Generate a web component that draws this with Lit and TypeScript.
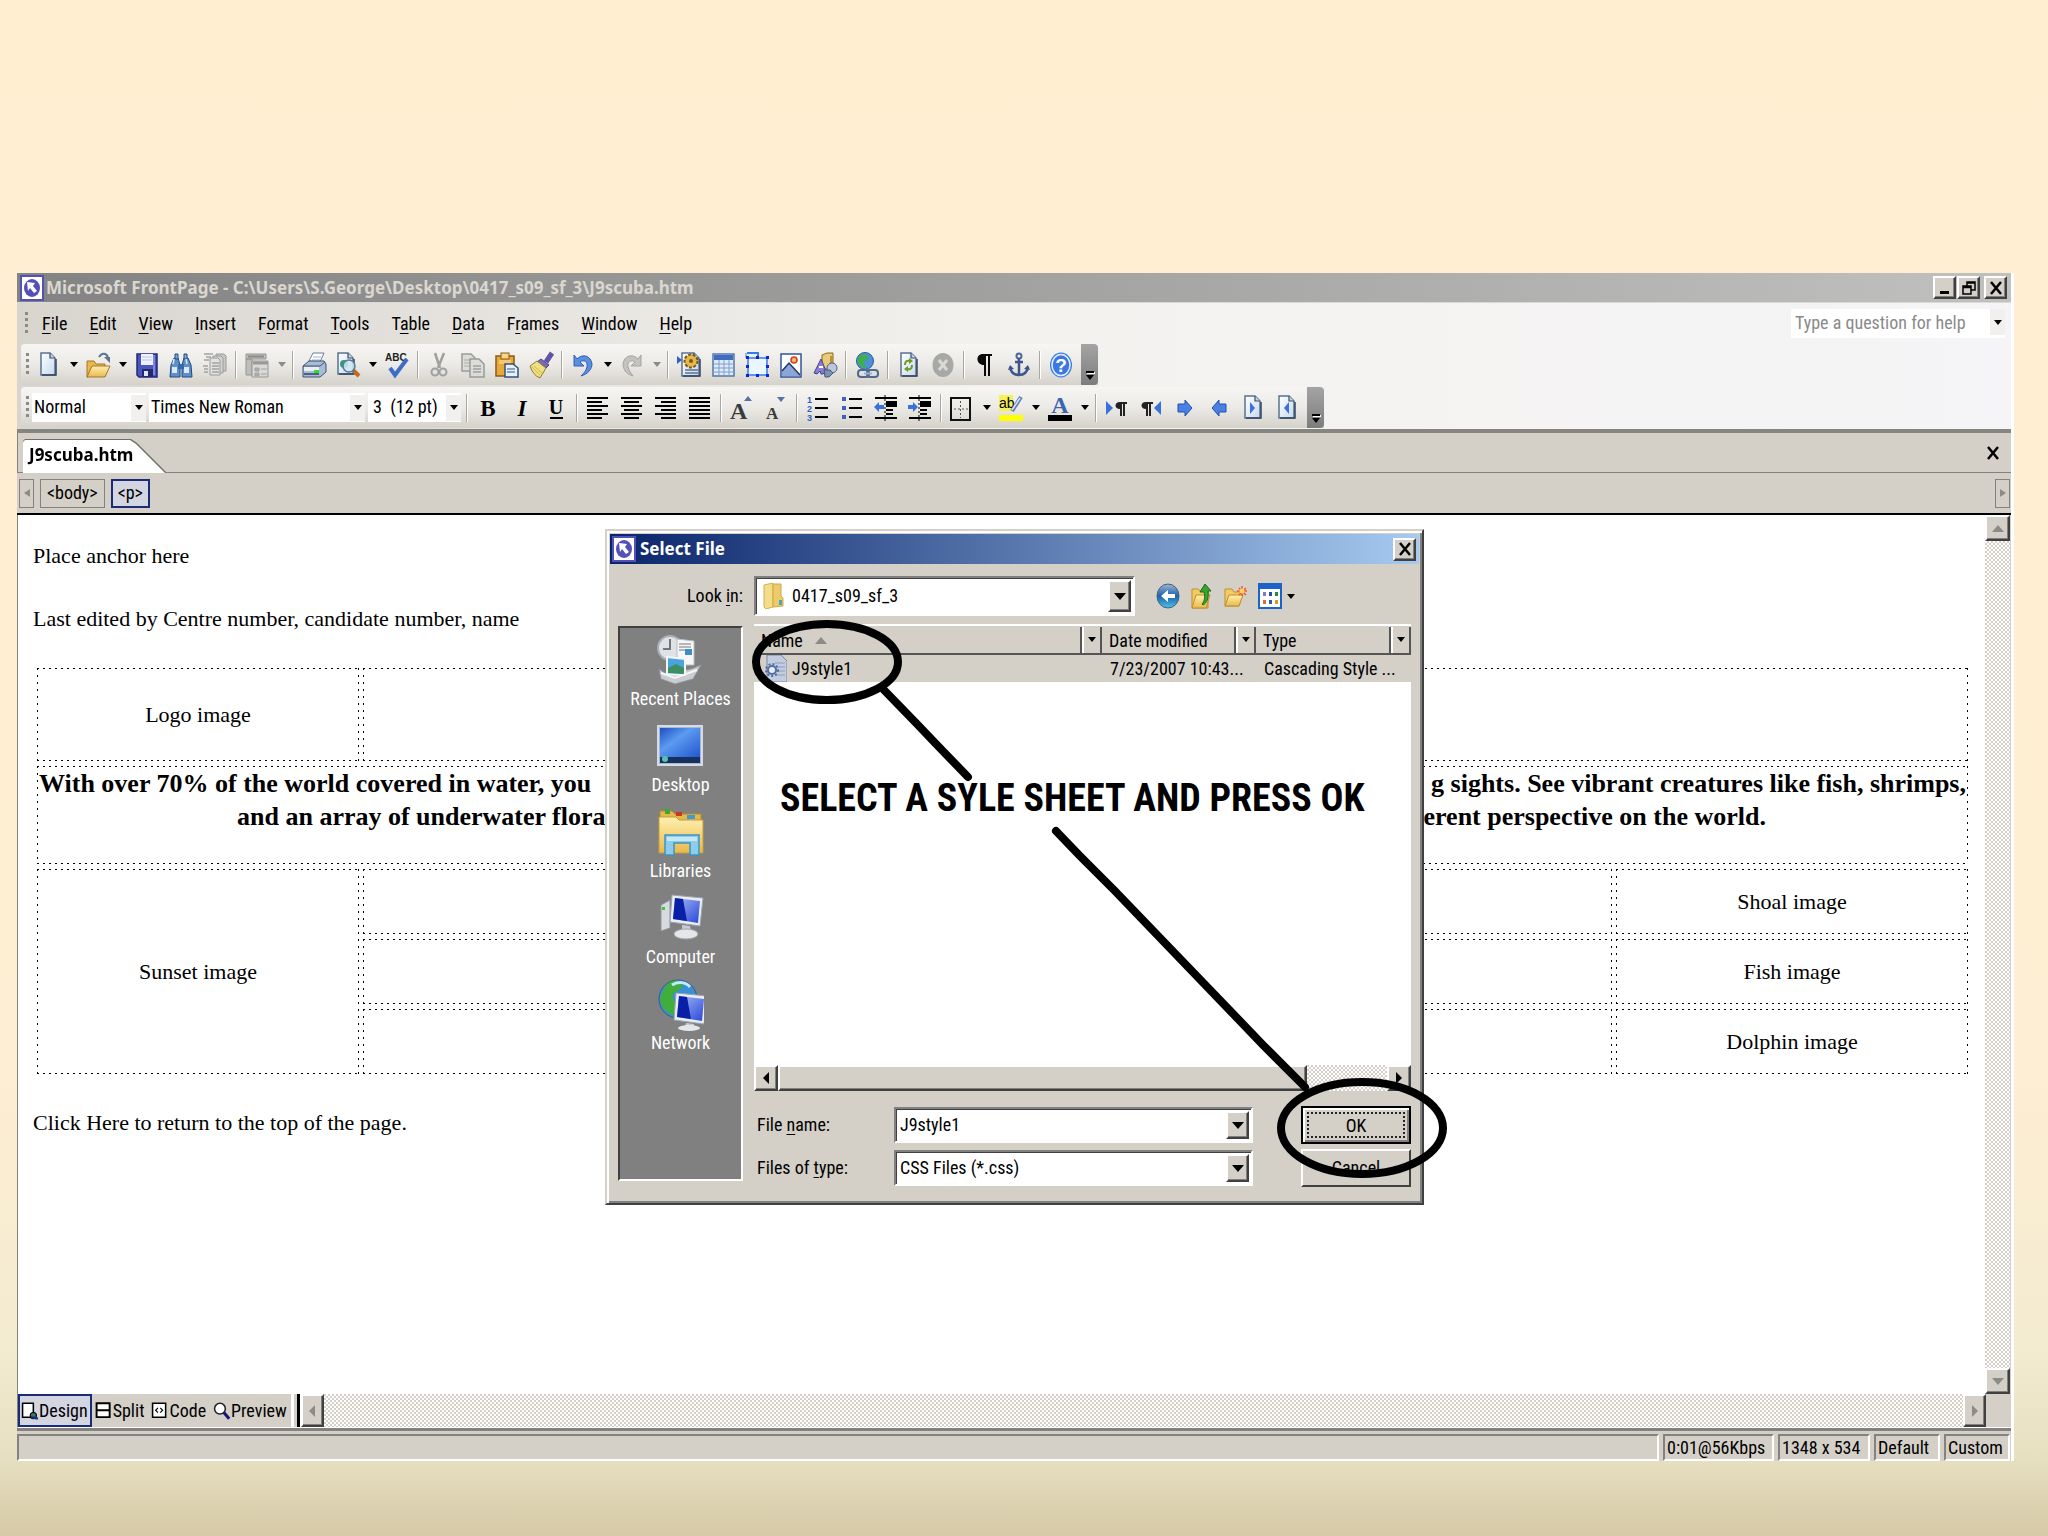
import { LitElement, html, css, svg, nothing, TemplateResult, SVGTemplateResult } from "lit";
import { customElement, state } from "lit/decorators.js";
import { classMap } from "lit/directives/class-map.js";

/* ---------- icon drawings, each on a 24 x 26 grid ---------- */
const page = (x: number, y: number, w: number, h: number) => svg`
  <path d="M${x} ${y}h${w - 5}l5 5v${h - 5}h-${w}z" fill="url(#gPaper)" stroke="#5b7291" stroke-width="1.5"/>
  <path d="M${x + w - 5} ${y}v5h5" fill="#c3d3ea" stroke="#3b4f6e" stroke-width="1.2"/>
  <path d="M${x + 1} ${y + h}h${w}v-${h - 6}" fill="none" stroke="#33445f" stroke-width="1.5"/>`;

const lines = (spec: number[][], color = "#000") =>
  spec.map(([x, y, w]) => svg`<rect x=${x} y=${y} width=${w} height="2" fill=${color}/>`);

const ICONS: Record<string, SVGTemplateResult> = {
  new: svg`${page(4, 1, 14, 22)}`,
  open: svg`
    <path d="M1 9h7l2 3h9v4H6L2 25H1z" fill="#e9b84a" stroke="#a8742a"/>
    <path d="M1 25l5-11h18l-5 11z" fill="url(#gFolder)" stroke="#a8742a"/>
    <path d="M13 5c3-5 8-4 9 1" fill="none" stroke="#5b7291" stroke-width="2"/><path d="M18 5h6v6z" fill="#5b7291"/>`,
  save: svg`
    <path d="M2 2h20v23H4l-2-2z" fill="#4a55c0" stroke="#23297a" stroke-width="1.5"/>
    <rect x="6" y="2" width="12" height="11" fill="#eef3fb"/><path d="M7 5h10M7 8h10" stroke="#b9c6e2"/>
    <rect x="7" y="17" width="11" height="8" fill="#23296a"/><rect x="9" y="19" width="4" height="5" fill="#dfe6f5"/>
    <path d="M19 3v20" stroke="#8f98ea" stroke-width="1.5"/>`,
  find: svg`
    <path d="M2 13l3-7h4l2 7v12H1z" fill="#5f8fcb" stroke="#1f4a85"/><path d="M22 13l-3-7h-4l-2 7v12h10z" fill="#5f8fcb" stroke="#1f4a85"/>
    <rect x="9" y="12" width="6" height="5" fill="#3569a8"/>
    <path d="M6 2h3v5H6zM15 2h3v5h-3z" fill="#7fa8dc" stroke="#1f4a85"/>
    <path d="M3 15h5v6H3zM15 15h5v6h-5z" fill="#dbe9fa"/><path d="M5 7l-1 5M17 7l1 5" stroke="#dbe9fa" stroke-width="1.5"/>`,
  stack: svg`
    <path d="M13 2h8l2 2v15H13z" fill="#c9c9c7" stroke="#9a9a98"/><path d="M10 4h8l2 2v15H10z" fill="#d5d5d3" stroke="#9a9a98"/>
    <path d="M7 6h8l2 2v15H7z" fill="#e2e2e0" stroke="#9a9a98"/>
    <path d="M9 11h7M9 14h7M9 17h7M9 20h7M1 2h9M3 5h5M1 8h5M0 14h5M1 17h4M1 20h4" stroke="#a2a2a0" stroke-width="1.5"/>`,
  publish: svg`
    <path d="M1 2h20v5H1zM1 7h6v16H1z" fill="#bdbdbb" stroke="#969694"/><path d="M3 4.500h16" stroke="#8a8a88" stroke-width="2"/>
    <path d="M7 9h16v16H7z" fill="#d9d9d7" stroke="#969694"/><path d="M8 11h15" stroke="#999" stroke-width="3"/>
    <path d="M10 16h4v3h-4zM10 21h4v3h-4zM16 17h6M16 22h6" fill="#b0b0ae" stroke="#a2a2a0"/>`,
  print: svg`
    <path d="M7 9l4-8h11l-4 9z" fill="#fff" stroke="#6b7f9c"/><path d="M11 5h8M10 8h8" stroke="#9fb0c8"/>
    <path d="M1 14l6-5h15l2 3v8l-6 5H1z" fill="#a9bcd6" stroke="#3d5275"/><path d="M1 14h17l5-4" fill="none" stroke="#3d5275"/>
    <path d="M2 15h15v4H2z" fill="#e9eff8"/><rect x="12" y="18" width="5" height="4" fill="#2ade2a"/><path d="M2 22h15" stroke="#4b6186" stroke-width="2"/>`,
  preview: svg`
    ${page(2, 1, 15, 21)}<circle cx="8" cy="12" r="4" fill="#2f9e75"/>
    <circle cx="13" cy="14" r="6" fill="#cfe7f4" fill-opacity=".85" stroke="#5b7899" stroke-width="1.500"/>
    <path d="M18 19l5 5" stroke="#c56a1d" stroke-width="4"/>`,
  spell: svg`
    <text x="0" y="9" font-family="Liberation Sans" font-weight="700" font-size="10" fill="#222">ABC</text>
    <path d="M5 16l5 7L22 7" fill="none" stroke="#3d6cc9" stroke-width="4"/>`,
  cut: svg`
    <path d="M8 1l5 15M17 1l-6 15" stroke="#a0a09e" stroke-width="2.500"/>
    <circle cx="8" cy="20" r="3.500" fill="none" stroke="#a0a09e" stroke-width="2"/><circle cx="16" cy="20" r="3.500" fill="none" stroke="#a0a09e" stroke-width="2"/>`,
  copy: svg`
    <path d="M1 2h9l4 4v13H1z" fill="#dcdcda" stroke="#9a9a98" stroke-width="1.500"/><path d="M3 8h8M3 11h8M3 14h8" stroke="#aaa"/>
    <path d="M9 7h9l5 5v13H9z" fill="#dcdcda" stroke="#9a9a98" stroke-width="1.500"/><path d="M12 14h8M12 17h8M12 20h8" stroke="#a0a09e" stroke-width="1.500"/>`,
  paste: svg`
    <rect x="1" y="4" width="18" height="20" fill="#e8a93a" stroke="#8d5a17" stroke-width="1.500"/><rect x="6" y="1" width="8" height="6" fill="#f3d88a" stroke="#8d5a17"/>
    <path d="M4 8h12v4H4z" fill="#f5c970"/><path d="M10 12h8l5 4v9H10z" fill="#e8f0fb" stroke="#33507e" stroke-width="1.500"/><path d="M12 17h8M12 20h8" stroke="#6c86b0" stroke-width="1.500"/>`,
  brush: svg`
    <path d="M23 1l-6 9" stroke="#5d54a8" stroke-width="5"/><path d="M12 7l8 6-3 3-9-6z" fill="#7a6bb5" stroke="#4b3f86"/>
    <path d="M8 9l9 7-6 10C6 24 3 20 1 14z" fill="#f1df83" stroke="#8f7a30"/><path d="M5 14l8 7M3 15l8 8" stroke="#cdb658"/>`,
  undo: svg`<path d="M3 3v11h10l-4-4c4-3 8 0 7 5-1 4-3 6-6 9 7-2 11-7 11-12C20 4 12 1 6 7z" fill="#5a8ee0" stroke="#2e5fb5"/>`,
  redo: svg`<path d="M21 3v11H11l4-4c-4-3-8 0-7 5 1 4 3 6 5 9C6 22 3 17 3 12 4 4 12 1 18 7z" fill="#c3c3c1" stroke="#a3a3a1"/>`,
  component: svg`
    ${page(5, 1, 17, 23)}<path d="M0 4l5 4-5 4z" fill="#2f61c4"/>
    <circle cx="14" cy="9" r="6.500" fill="#e4b84c" stroke="#7b5a17" stroke-dasharray="3 1.500" stroke-width="2"/><circle cx="14" cy="9" r="2" fill="#7b5a17"/>
    <path d="M8 18h13M8 21h13" stroke="#5b7291" stroke-width="1.500"/>`,
  table: svg`
    <rect x="2" y="2" width="21" height="22" fill="#dfeaf9" stroke="#5577ab" stroke-width="1.500"/><rect x="3" y="3" width="19" height="5" fill="#3d6cc0"/>
    <path d="M3 12h19M3 16h19M3 20h19M8 8v15M13 8v15M18 8v15" stroke="#7f9dcb"/>`,
  layer: svg`
    <path d="M2 1h11v6" fill="none" stroke="#2f7df0" stroke-width="2"/><rect x="3" y="6" width="19" height="17" fill="#e9f6ff" stroke="#2f7df0" stroke-width="1.500"/>
    <path d="M1 1v5h3" stroke="#2f7df0" fill="none"/>
    ${[1, 11, 21].map((x) => [4, 13, 22].map((y) => (x === 11 && y === 13 ? nothing : svg`<rect x=${x} y=${y} width="3" height="3" fill="#1024c8"/>`)))}`,
  picture: svg`
    <rect x="2" y="2" width="20" height="23" fill="#fff" stroke="#31549c" stroke-width="1.500"/><path d="M3 19l7-8 11 12v1H3z" fill="#8aa5d6"/>
    <path d="M3 19l7-8 11 12" fill="none" stroke="#1e3569" stroke-width="1.500"/><circle cx="15" cy="8" r="3" fill="#f7b36b" stroke="#c8451c" stroke-width="1.500"/>`,
  shapes: svg`
    <path d="M9 3l5-2h6v13l-4 3H9z" fill="#e8cb7a" stroke="#8a6a1d"/><path d="M17 4h3v10h-3z" fill="#b9923a"/>
    <path d="M1 21L8 7l5 12-3 3h-2l-1-3-3 3z" fill="#8b7fd4" stroke="#473b91"/><path d="M6 15h4" stroke="#fff" stroke-width="2"/>
    <circle cx="19" cy="16" r="5" fill="#b9c8dd" stroke="#50637f"/><path d="M11 18h6l3 3-4 4h-4z" fill="#7d92b3" stroke="#43577a"/>`,
  link: svg`
    <circle cx="10" cy="9" r="8.500" fill="#4b8fd8" stroke="#2a5c9b"/><path d="M5 3c4-2 9 0 8 3s-4 2-4 5 3 3 2 5c-4 0-8-3-9-7z" fill="#3fae4c"/>
    <rect x="3" y="18" width="11" height="7" rx="3" fill="none" stroke="#4f6a92" stroke-width="2"/><rect x="12" y="18" width="11" height="7" rx="3" fill="none" stroke="#4f6a92" stroke-width="2"/><path d="M9 21.500h8" stroke="#9cb2d2" stroke-width="2"/>`,
  refresh: svg`
    ${page(4, 1, 15, 23)}<path d="M8 13c0-4 2-5 6-4M15 13c0 4-2 5-6 4" fill="none" stroke="#6a9e18" stroke-width="2"/><path d="M12 6l4 3-4 3zM11 14l-4 3 4 3z" fill="#6a9e18"/>`,
  stop: svg`<ellipse cx="12" cy="13" rx="10.500" ry="12" fill="#a8a8a6"/><path d="M8 8l8 10M16 8L8 18" stroke="#d9d9d7" stroke-width="3"/>`,
  pilcrow: svg`<path d="M19 2v2h-2v20h-2V4h-2v20h-2V13C3 13 2 2 10 2z" fill="#0a0a0a"/>`,
  anchor: svg`
    <circle cx="12" cy="4" r="2.500" fill="none" stroke="#51679c" stroke-width="2"/><path d="M12 6v17M8 10h8M3 15c1 6 5 8 9 8s8-2 9-8" fill="none" stroke="#3d558f" stroke-width="2.500"/>
    <path d="M1 18l2-5 4 4zM23 18l-2-5-4 4z" fill="#3d558f"/>`,
  help: svg`
    <ellipse cx="12" cy="13" rx="11" ry="12.500" fill="#3c7ae6"/><ellipse cx="12" cy="13" rx="9" ry="10.500" fill="#3b78e4" stroke="#e5efff" stroke-width="1.500"/>
    <text x="12" y="20" text-anchor="middle" font-family="Liberation Sans" font-weight="700" font-size="19" fill="#fff">?</text>`,
  bold: svg`<text x="12" y="21" text-anchor="middle" font-family="Liberation Serif" font-weight="700" font-size="23">B</text>`,
  italic: svg`<text x="12" y="21" text-anchor="middle" font-family="Liberation Serif" font-weight="700" font-style="italic" font-size="23">I</text>`,
  underline: svg`<text x="12" y="19" text-anchor="middle" font-family="Liberation Serif" font-weight="700" font-size="20">U</text><rect x="6" y="22" width="13" height="2"/>`,
  left: svg`${lines([[1, 2, 21], [1, 6, 15], [1, 10, 21], [1, 14, 15], [1, 18, 21], [1, 22, 15]])}`,
  center: svg`${lines([[1, 2, 21], [4, 6, 15], [1, 10, 21], [4, 14, 15], [1, 18, 21], [4, 22, 15]])}`,
  right: svg`${lines([[1, 2, 21], [7, 6, 15], [1, 10, 21], [7, 14, 15], [1, 18, 21], [7, 22, 15]])}`,
  justify: svg`${lines([[1, 2, 21], [1, 6, 21], [1, 10, 21], [1, 14, 21], [1, 18, 21], [1, 22, 21]])}`,
  grow: svg`<text x="0" y="24" font-family="Liberation Serif" font-weight="700" font-size="24" fill="#3a3a3a">A</text><path d="M14 6l4-5 4 5z" fill="#5573a8"/>`,
  shrink: svg`<text x="2" y="24" font-family="Liberation Serif" font-weight="700" font-size="17" fill="#3a3a3a">A</text><path d="M13 2h8l-4 5z" fill="#5573a8"/>`,
  numbers: svg`
    <text x="1" y="8" font-family="Liberation Sans" font-weight="700" font-size="9" fill="#2f61c4">1</text><text x="1" y="17" font-family="Liberation Sans" font-weight="700" font-size="9" fill="#2f61c4">2</text>
    <text x="1" y="26" font-family="Liberation Sans" font-weight="700" font-size="9" fill="#2f61c4">3</text>${lines([[9, 3, 13], [9, 12, 13], [9, 21, 13]])}`,
  bullets: svg`<path d="M2 2h4v4H2zM2 11h4v4H2zM2 20h4v4H2z" fill="#3f63b8"/>${lines([[9, 3, 13], [9, 12, 13], [9, 21, 13]])}`,
  outdent: svg`${lines([[1, 2, 22], [12, 6, 11], [12, 10, 11], [12, 14, 7], [12, 18, 7], [1, 22, 22]])}<rect x="12" y="8" width="11" height="2"/><path d="M0 12l5-5v3h5v4H5v3z" fill="#3a72dc"/><path d="M11 0v26" stroke="#000" stroke-dasharray="2 2"/>`,
  indent: svg`${lines([[1, 2, 22], [12, 6, 11], [12, 10, 11], [12, 14, 7], [12, 18, 7], [1, 22, 22]])}<rect x="12" y="8" width="11" height="2"/><path d="M10 12L5 7v3H0v4h5v3z" fill="#3a72dc"/><path d="M11 0v26" stroke="#000" stroke-dasharray="2 2"/>`,
  borders: svg`<rect x="1" y="3" width="19" height="22" fill="none" stroke="#111" stroke-width="2"/><path d="M4 14h14M10.500 6v17" stroke="#555" stroke-dasharray="2 2"/>`,
  highlight: svg`
    <rect x="0" y="0" width="14" height="16" fill="#f4f05a"/><text x="0" y="13" font-family="Liberation Sans" font-size="14">ab</text>
    <path d="M22 2l-9 14" stroke="#5c7fb5" stroke-width="4"/><path d="M21 3l-8 12" stroke="#dce8f8" stroke-width="1.500"/><rect x="0" y="20" width="24" height="6" fill="#ff0"/>`,
  color: svg`<text x="12" y="18" text-anchor="middle" font-family="Liberation Serif" font-weight="700" font-size="24" fill="#3d63b5">A</text><rect x="0" y="20" width="24" height="6" fill="#000"/>`,
  ltr: svg`<path d="M1 6l7 7-7 7z" fill="#3a72dc"/><path d="M22 7v2h-2v12h-2V9h-1v12h-2v-7c-6 0-6-7 0-7z" fill="#222"/>`,
  rtl: svg`<path d="M22 6l-7 7 7 7z" fill="#3a72dc"/><path d="M14 7v2h-2v12h-2V9H9v12H7v-7C1 14 1 7 7 7z" fill="#222"/>`,
  next: svg`<path d="M5 9h7V5l7 8-7 8v-4H5z" fill="#4a7fe3" stroke="#2350ac"/>`,
  prev: svg`<path d="M19 9h-7V5l-7 8 7 8v-4h7z" fill="#4a7fe3" stroke="#2350ac"/>`,
  pageNext: svg`${page(4, 1, 15, 22)}<path d="M9 7l5 6-5 6z" fill="#3a72dc"/>`,
  pagePrev: svg`${page(4, 1, 15, 22)}<path d="M14 7l-5 6 5 6z" fill="#3a72dc"/>`,
  design: svg`<path d="M3 3h14v18H3z" fill="#fff" stroke="#000" stroke-width="2"/><circle cx="17" cy="19" r="4" fill="#3a7a58" stroke="#000" stroke-width="1.500"/><path d="M14 21l9 2" stroke="#1b2a8a" stroke-width="3"/>`,
  split: svg`<path d="M3 3h17v18H3zM3 12h17" fill="#fff" stroke="#000" stroke-width="2.500"/>`,
  code: svg`<path d="M3 3h17v18H3z" fill="#fff" stroke="#000" stroke-width="2"/><path d="M10 9l-3 3 3 3M13 9l3 3-3 3" fill="none" stroke="#000" stroke-width="1.500"/>`,
  lens: svg`<circle cx="10" cy="10" r="7" fill="#fff" stroke="#222" stroke-width="2"/><path d="M15 15l7 8" stroke="#16167a" stroke-width="4"/>`,
};

const icon = (name: string) => svg`<svg class="ico" viewBox="0 0 24 26" width="24" height="26" aria-hidden="true">${ICONS[name]}</svg>`;

const appIcon = html`<svg class="app-ico" viewBox="0 0 24 26" aria-hidden="true">
  <rect width="24" height="26" fill="#5450b8"/><rect x="2" y="2" width="20" height="22" fill="#fff"/>
  <ellipse cx="12" cy="13" rx="8" ry="9" fill="#5450b8"/><path d="M7 7l8 1-2 3 4 5-3 2-4-5-2 3z" fill="#fff"/></svg>`;

const tri = (dir: "down" | "up" | "left" | "right", cls = "") => html`<i class="tri ${dir} ${cls}"></i>`;
const cross = html`<svg class="glyph" viewBox="0 0 14 14" width="14" height="14" aria-hidden="true"><path d="M2 1l10 12M12 1L2 13" stroke="#000" stroke-width="2.500"/></svg>`;

type Item = string | ["|"] | ["v", boolean?];
const STANDARD: Item[] = [
  "new", ["v"], "open", ["v"], "save", "find", "stack", ["|"], "publish", ["v", true], ["|"], "print", "preview", ["v"], "spell", ["|"],
  "cut", "copy", "paste", "brush", ["|"], "undo", ["v"], "redo", ["v", true], ["|"], "component", "table", "layer", "picture", "shapes", ["|"],
  "link", ["|"], "refresh", "stop", ["|"], "pilcrow", "anchor", ["|"], "help",
];
const FORMATTING: Item[] = [
  ["|"], "bold", "italic", "underline", ["|"], "left", "center", "right", "justify", ["|"], "grow", "shrink", ["|"],
  "numbers", "bullets", "outdent", "indent", ["|"], "borders", ["v"], "highlight", ["v"], "color", ["v"], ["|"],
  "ltr", "rtl", "next", "prev", "pageNext", "pagePrev",
];
const MENUS: [string, string, string][] = [
  ["", "F", "ile"], ["", "E", "dit"], ["", "V", "iew"], ["", "I", "nsert"], ["F", "o", "rmat"], ["", "T", "ools"],
  ["T", "a", "ble"], ["", "D", "ata"], ["F", "r", "ames"], ["", "W", "indow"], ["", "H", "elp"],
];

const monitor = svg`
  <path d="M14 2l31 3-3 28-30-4z" fill="#e9edf4" stroke="#9aa3b3"/><path d="M17 5l25 3-2 22-25-4z" fill="url(#gScreen)"/>
  <path d="M17 5l8 1 4 22-14-2z" fill="#0a1fa8"/>`;
const PLACES: [string, SVGTemplateResult][] = [
  ["Recent Places", svg`
    <circle cx="13" cy="13" r="12" fill="#dfe3e6" stroke="#a9afb4" stroke-width="2"/><path d="M13 4v10H6" fill="none" stroke="#6f777d" stroke-width="2"/>
    <path d="M20 4l17 2v24H20z" fill="#f5f6f7" stroke="#b9bdc0"/><path d="M22 9h12M22 12h12M22 15h6" stroke="#9aa2a8" stroke-width="1.500"/><rect x="28" y="14" width="7" height="6" fill="#3e8ec4"/>
    <path d="M2 34l6 4 26-4 10-4-8 14-18 5L4 44z" fill="#c9cdd0" stroke="#8f9498"/><path d="M10 22l18 2v16l-18-1z" fill="#4aa3df" stroke="#f2f6f8" stroke-width="2"/>
    <path d="M11 33l8-4 8 4v6l-16-1z" fill="#3d8f62"/><path d="M4 38l14 5 22-8" fill="none" stroke="#f4f5f6" stroke-width="2"/>`],
  ["Desktop", svg`
    <rect x="1" y="5" width="44" height="39" fill="#a9b7cf" stroke="#d4dcea" stroke-width="2"/><rect x="3" y="7" width="40" height="29" fill="url(#gDesk)"/>
    <rect x="3" y="36" width="40" height="6" fill="#17315f"/><circle cx="8" cy="38" r="3" fill="#5cc0a8"/>`],
  ["Libraries", svg`
    <path d="M2 4h12l3 3h26v12H2z" fill="#e3b94a" stroke="#b78b28"/><rect x="7" y="2" width="5" height="5" fill="#3fa535"/><rect x="18" y="5" width="6" height="4" fill="#c8372a"/><rect x="29" y="8" width="8" height="4" fill="#3d9bd6"/>
    <path d="M1 10h17l3 3h24v33H1z" fill="url(#gFolder)" stroke="#c69c38"/>
    <path d="M7 28h34v20h-9V36H16v12H7z" fill="#8ccdec" stroke="#3f93bf" stroke-width="1.500"/><path d="M9 30h30v4H9z" fill="#c5e8f7"/>`],
  ["Computer", svg`
    <path d="M3 12l9-5v28l-9 3z" fill="#d7dade" stroke="#8f959d"/><rect x="4" y="14" width="3" height="3" fill="#3c3"/>${monitor}
    <path d="M24 32l8 1 1 6h-9z" fill="#c8ccd2"/><ellipse cx="28" cy="41" rx="12" ry="5" fill="#e4e6e9" stroke="#a1a6ad"/>`],
  ["Network", svg`
    <circle cx="20" cy="20" r="19" fill="#3b8fd4" stroke="#2a5b98"/><path d="M8 6c8-8 20-4 16 2s-10 4-9 10 6 8 4 18C9 36 2 28 2 18z" fill="#3fae3c"/><path d="M14 6c6-4 14-3 18 2" stroke="#c2eaff" stroke-width="3" fill="none"/>
    <g transform="translate(4 12)">${monitor}</g><path d="M28 44l8 1v3h-9z" fill="#c8ccd2"/><ellipse cx="31" cy="49" rx="11" ry="3" fill="#e4e6e9"/>`],
];

@customElement("app-root")
export class AppRoot extends LitElement {
  @state() private view = "Design";

  static styles = css`
    :host {
      --ui: "Roboto Condensed", "Noto Sans", sans-serif;
      --strong: "Noto Sans", sans-serif;
      --face: #d4d0c8;
      display: flex;
      box-sizing: border-box;
      min-height: 100vh;
      padding: 273px 34px 75px 17px;
      background: linear-gradient(#ffeed0 0, #feeed3 70%, #f3ebd0 88%, #e6dfc0 95%, #d6c9a6 100%);
      font-family: var(--ui);
      font-size: 18px;
      line-height: 24px;
      color: #000;
    }
    * { box-sizing: border-box; }
    button, select, input { font: inherit; color: inherit; margin: 0; padding: 0; border: 0; border-radius: 0; background: none; appearance: none; }
    u { text-underline-offset: 3px; text-decoration-thickness: 1px; }
    .defs { position: absolute; }
    .ico { overflow: visible; }
    .window { position: relative; flex: 1; display: flex; flex-direction: column; min-width: 0; background: var(--face); border-right: 3px solid #fff; }
    .titlebar { display: flex; align-items: center; gap: 2px; height: 30px; padding: 0 4px 0 3px; background: linear-gradient(90deg, #838383, #c0c0be); border-bottom: 1px solid #dcdad6; color: #dad7d0; }
    .app-ico { width: 24px; height: 26px; flex: none; }
    .titlebar h1, .dialog h2 { margin: 0; flex: 1; font: 700 17px/24px var(--strong); white-space: nowrap; }
    .winbtn { display: grid; place-items: center; width: 23px; height: 23px; background: var(--face); border: 2px solid; border-color: #fff #404040 #404040 #fff; box-shadow: inset -1px -1px #808080; }
    .titlebar .winbtn { margin-left: -1px; }
    .titlebar .winbtn.gap { margin-left: 2px; }
    .bars { background: linear-gradient(90deg, #d8d5cf, #f4f2ef 50%, #f5f4f6); border-bottom: 4px solid #858582; padding-bottom: 1px; }
    .menubar { display: flex; align-items: flex-start; height: 41px; padding: 6px 6px 0 8px; }
    .menubar nav { display: flex; flex: 1; padding-left: 1px; }
    .menubar nav button { height: 30px; padding: 0 11px; }
    .handle { width: 3px; height: 24px; margin: 3px 2px 0 0; background: repeating-linear-gradient(#8d8a84 0 3px, transparent 3px 6px); }
    .ask { display: flex; width: 214px; height: 29px; background: #fff; }
    .ask input { flex: 1; min-width: 0; padding: 0 4px 2px; }
    .ask input::placeholder { color: #8a8a8a; opacity: 1; }
    .arrow { display: grid; place-items: center; width: 15px; height: 26px; background: #f1f0ee; }
    .toolbar { display: flex; width: fit-content; height: 41px; margin: 0 0 2px 4px; border-radius: 4px 0 0 4px; background: linear-gradient(#f7f6f4, #eceae6 50%, #d5d2cb); align-items: center; }
    .toolbar .handle { margin: 0 3px 0 5px; }
    .toolbar:last-child { margin-bottom: 0; }
    .tool { display: grid; place-items: center; width: 34px; height: 36px; }
    .drop { display: grid; place-items: center; width: 15px; height: 36px; }
    .sep { width: 2px; height: 28px; margin: 0 3px; background: #a9a7a2; border-right: 1px solid #fff; }
    .cap { display: grid; align-content: end; justify-items: center; gap: 2px; width: 17px; height: 41px; padding-bottom: 5px; margin-left: 3px; background: linear-gradient(#a4a4a4, #7d7d7d); border-radius: 0 4px 4px 0; }
    .cap::before { content: ""; width: 8px; height: 2px; background: #000; box-shadow: 1px 1px #fff; }
    .pick { display: flex; align-items: center; height: 29px; background: #fff; margin-right: 3px; }
    .pick select { flex: 1; min-width: 0; height: 29px; padding: 0 2px 2px; white-space: pre; }
    .pick.style { width: 114px; } .pick.font { width: 216px; } .pick.size { width: 93px; margin-right: 2px; } .pick.size select { padding-left: 5px; }
    .tri { display: block; width: 0; height: 0; border: 4px solid transparent; }
    .tri.down { border-top: 5px solid #000; border-bottom: 0; } .tri.up { border-bottom: 7px solid #000; border-top: 0; border-left-width: 6px; border-right-width: 6px; }
    .tri.left { border-right: 6px solid #000; border-left: 0; border-top-width: 6px; border-bottom-width: 6px; } .tri.right { border-left: 6px solid #000; border-right: 0; border-top-width: 6px; border-bottom-width: 6px; }
    .tri.dim.down { border-top-color: #8d8b87; } .tri.dim.up { border-bottom-color: #8d8b87; } .tri.dim.left { border-right-color: #8d8b87; } .tri.dim.right { border-left-color: #8d8b87; }
    .tri.big { border-left-width: 6px; border-right-width: 6px; border-top-width: 7px; }
    .tabs { display: flex; justify-content: space-between; height: 40px; border-bottom: 1px solid #84827e; border-left: 1px solid #84827e; padding: 7px 8px 0 5px; }
    .tab { width: 142px; height: 33px; filter: drop-shadow(0 -1px #6f6d69) drop-shadow(1px 0 #6f6d69); }
    .tab button { width: 142px; height: 33px; padding: 0 0 3px 6px; text-align: left; background: #fff; clip-path: polygon(0 2px, 2px 0, 107px 0, 113px 4px, 100% 100%, 0 100%); font: 700 17px/24px var(--strong); }
    .close { display: grid; place-items: center; width: 20px; height: 26px; }
    .path { display: flex; align-items: center; gap: 6px; height: 42px; border-bottom: 2px solid #000; padding: 0 1px 0 2px; }
    .path button { height: 29px; min-width: 38px; padding: 0 6px; border: 1px solid #84827e; }
    .path button.on { border: 2px solid #1a2c78; background: #d3d5e0; padding: 0 5px; }
    .path button.step { display: grid; place-items: center; width: 15px; min-width: 0; padding: 0; }
    .path button:last-child { margin-left: auto; }
    .path .tri { border-top-width: 4px; border-bottom-width: 4px; }
    .work { flex: 1; display: flex; min-height: 0; border-left: 1px solid #84827e; }
    .doc { flex: 1; min-width: 0; background: #fff; padding: 24px 13px 0 15px; font: 22px/34px "Liberation Serif", serif; }
    .doc p { margin: 0 0 29px; }
    .doc table { width: 100%; margin: -2px 0 27px; border-collapse: separate; border-spacing: 4px 5px; table-layout: fixed; text-align: center; }
    .doc td { padding: 0; height: 65px;
      --h: repeating-linear-gradient(90deg, #000 0 2px, transparent 2px 6px);
      --v: repeating-linear-gradient(#000 0 2px, transparent 2px 7px);
      background: var(--h) 0 0/100% 1px no-repeat, var(--h) 0 100%/100% 1px no-repeat, var(--v) 0 0/1px 100% no-repeat, var(--v) 100% 0/1px 100% no-repeat; }
    .doc .tall { height: 93px; }
    .doc .intro { height: 98px; vertical-align: top; padding: 1px 2px; font-size: 26px; line-height: 33px; font-weight: 700; white-space: nowrap; }
    .intro div { display: flex; justify-content: space-between; }
    .intro .short { padding: 0 200px 0 198px; }
    .c1 { width: 322px; } .c3 { width: 352px; }
    .dither { background: repeating-conic-gradient(#fff 0 25%, #d4d0c8 0 50%) 0 0/4px 4px; }
    .vscroll { display: flex; flex-direction: column; justify-content: space-between; width: 25px; margin-right: 1px; }
    .sbtn { display: grid; place-items: center; width: 25px; height: 26px; background: var(--face); border: 2px solid; border-color: #fff #404040 #404040 #fff; box-shadow: inset -1px -1px #808080; }
    .views { display: flex; height: 34px; border-left: 1px solid #84827e; border-bottom: 1px solid #fff; padding-right: 25px; }
    .views button.view { display: flex; align-items: center; height: 33px; padding: 0 2px 0 0; border: 2px solid transparent; }
    .views button.on { border-color: #1a2c78; background: #d3d5e0; }
    .views .ico { width: 19px; height: 20px; }
    .views .split { width: 10px; background: linear-gradient(90deg, #fff 0 3px, var(--face) 3px 6px, #000 6px 9px, #fff 9px); }
    .views .sbtn { height: 33px; width: 23px; }
    .views .dither { flex: 1; }
    .status { display: flex; gap: 4px; height: 33px; border-top: 3px solid #84827e; padding: 3px 1px 0 0; }
    .status span { height: 27px; line-height: 24px; padding: 0 2px; border: 2px solid; border-color: #84827e #fff #fff #84827e; white-space: nowrap; }
    .status .wide { flex: 1; } .s1 { width: 111px; } .s2 { width: 92px; } .s3 { width: 66px; } .s4 { width: 66px; }

    .dialog { position: absolute; left: 588px; top: 256px; width: 819px; min-height: 676px; display: flex; flex-direction: column; background: var(--face); border: 2px solid; border-color: #d4d0c8 #404040 #404040 #d4d0c8; box-shadow: inset 2px 2px #fff, inset -2px -2px #808080; padding: 3px; }
    .dialog header { display: flex; flex: none; align-items: center; gap: 4px; height: 30px; padding: 0 3px 0 2px; background: linear-gradient(90deg, #0a246a, #a6caf0); color: #fff; }
    .dlg { flex: 1; display: grid; grid-template-columns: 125px 1fr; column-gap: 11px; grid-template-rows: 60px 1fr; padding: 0 8px 13px 8px; }
    .dlg .lookl { justify-self: end; align-self: center; padding-top: 4px; }
    .look { display: flex; align-items: center; padding-top: 4px; }
    .combo { display: flex; align-items: center; background: #fff; border: 2px solid; border-color: #808080 #fff #fff #808080; box-shadow: inset 1px 1px #404040; padding: 2px; }
    .look .combo { width: 381px; height: 40px; padding-left: 6px; }
    .combo select { flex: 1; min-width: 0; height: 30px; padding: 0 2px; }
    .combo svg { flex: none; }
    .look .combo select { padding-left: 8px; }
    .combo .sbtn { height: 100%; width: 23px; }
    .look .t { display: grid; place-items: center; width: 34px; height: 34px; }
    .look .combo + .t { margin-left: 16px; }
    .places { display: flex; flex-direction: column; align-items: center; background: #808080; border: 2px solid; border-color: #404040 #fff #fff #404040; padding-top: 7px; color: #fff; margin: 2px 0 6px; }
    .places button { display: flex; flex-direction: column; align-items: center; height: 86px; }
    .main { display: flex; flex-direction: column; min-width: 0; }
    .list { display: flex; flex-direction: column; height: 467px; background: #fff; }
    .list table { width: 100%; border-collapse: collapse; table-layout: fixed; background: var(--face); }
    .list th { height: 29px; padding: 0; font-weight: 400; text-align: left; border-top: 2px solid #fff; border-bottom: 2px solid #555; }
    .list th div { display: flex; align-items: stretch; height: 26px; }
    .list th span { flex: 1; padding-left: 7px; border-right: 2px solid #555; line-height: 27px; }
    .list th button { display: grid; place-items: center; width: 20px; border-left: 2px solid #fff; border-right: 2px solid #555; }
    .list td { height: 28px; padding: 0 0 0 8px; white-space: nowrap; overflow: hidden; }
    .list td.file { padding-left: 11px; } .file div { display: flex; align-items: center; gap: 5px; }
    .list .tri.sort { display: inline-block; margin: 0 0 3px 12px; }
    .hs { display: flex; height: 26px; margin-top: auto; }
    .hs .sbtn { width: 24px; } .hs .thumb { width: 529px; } .hs .dither { flex: 1; }
    .fields { display: grid; grid-template-columns: 137px 359px 1fr; grid-auto-rows: 38px; align-items: center; row-gap: 5px; padding-top: 15px; padding-left: 3px; }
    .fields .combo { height: 36px; }
    .fields .push { justify-self: end; width: 110px; height: 38px; border: 2px solid; border-color: #fff #404040 #404040 #fff; background: var(--face); }
    .fields .push.ok { border-color: #000; box-shadow: inset 2px 2px #fff, inset -2px -2px #808080; padding: 4px; }
    .push.ok span { display: grid; place-items: center; height: 26px; border: 2px dotted #222; }
    .note { position: absolute; left: 173px; top: 245px; margin: 0; font-size: 38px; line-height: 44px; font-weight: 700; white-space: nowrap; }
    .ink { position: absolute; left: -1px; top: -2px; pointer-events: none; overflow: visible; }
  `;

  private bar(items: Item[]): TemplateResult[] {
    return items.map((it) => {
      if (typeof it === "string") return html`<button class="tool" aria-label=${it}>${icon(it)}</button>`;
      if (it[0] === "|") return html`<div class="sep"></div>`;
      return html`<button class="drop" aria-label="More">${tri("down", it[1] ? "dim" : "")}</button>`;
    });
  }

  private pick(cls: string, label: string, value: string) {
    return html`<div class="pick ${cls}"><select aria-label=${label}><option>${value}</option></select><span class="arrow">${tri("down")}</span></div>`;
  }

  private dialog() {
    return html`
      <section class="dialog" role="dialog" aria-labelledby="dlg-title">
        <header>${appIcon}<h2 id="dlg-title">Select File</h2><button class="winbtn" aria-label="Close">${cross}</button></header>
        <div class="dlg">
          <label class="lookl" for="look">Look <u>i</u>n:</label>
          <div class="look">
            <div class="combo">
              <svg viewBox="0 0 22 26" width="22" height="26" aria-hidden="true"><path d="M2 2l9-2v24l-7 2-2-2z" fill="#f3dc8a" stroke="#d3b04e"/><path d="M11 1h8v12l2 2v8l-10 1z" fill="#eccb68" stroke="#cfa848"/><rect x="17" y="17" width="3" height="5" fill="#49a7b5"/></svg>
              <select id="look"><option>0417_s09_sf_3</option></select><span class="sbtn">${tri("down", "big")}</span>
            </div>
            <button class="t" aria-label="Back"><svg viewBox="0 0 24 26" width="24" height="26"><ellipse cx="12" cy="13" rx="11" ry="12" fill="url(#gBack)" stroke="#44607c"/><path d="M5 13l7-6v4h7v4h-7v4z" fill="#fff"/></svg></button>
            <button class="t" aria-label="Up one level"><svg viewBox="0 0 24 26" width="24" height="26"><path d="M2 6h6l2 2h8v17H2z" fill="#f0cc62" stroke="#c08f2c"/><path d="M2 25l4-13h14l-4 13z" fill="url(#gFolder)" stroke="#c08f2c"/><path d="M12 21c3-3 3-8 2-12h-4l5-8 6 7h-3c1 7-1 12-5 14z" fill="#35a52c" stroke="#1c6b18"/></svg></button>
            <button class="t" aria-label="New folder"><svg viewBox="0 0 24 26" width="24" height="26"><path d="M1 6h7l2 3h8v4l-3 10H1z" fill="#f0cc62" stroke="#c08f2c"/><path d="M1 23l4-11h14l-4 11z" fill="url(#gFolder)" stroke="#c08f2c"/><path d="M18 3v10M13 8h10M15 5l7 7M22 5l-7 7" stroke="#f0562c" stroke-width="1.500"/><circle cx="18" cy="8" r="2.500" fill="#ffd36a"/></svg></button>
            <button class="t" aria-label="Views"><svg viewBox="0 0 24 26" width="24" height="26"><rect x="1" y="1" width="22" height="24" fill="#fff" stroke="#1c62c8" stroke-width="2"/><path d="M1 1h22v5H1z" fill="#1c62c8"/><path d="M5 9h3v4H5z" fill="#8a78b8"/><path d="M11 9h3v4h-3z" fill="#2b4f9e"/><path d="M17 9h3v4h-3z" fill="#2c8a3a"/><path d="M5 17h3v4H5z" fill="#e0683a"/><path d="M11 17h3v4h-3z" fill="#2b60b0"/><path d="M17 17h3v4h-3z" fill="#d69a2c"/></svg></button>
            ${tri("down")}
          </div>
          <nav class="places" aria-label="Places">
            ${PLACES.map(([name, art]) => html`<button><svg viewBox="0 0 46 52" width="46" height="52" aria-hidden="true">${art}</svg><span>${name}</span></button>`)}
          </nav>
          <div class="main">
            <div class="list">
              <table>
                <colgroup><col /><col style="width:154px" /><col style="width:155px" /></colgroup>
                <tr>
                  <th><div><span>Name${tri("up", "dim sort")}</span><button aria-label="Filter name">${tri("down")}</button></div></th>
                  <th><div><span>Date modified</span><button aria-label="Filter date">${tri("down")}</button></div></th>
                  <th><div><span>Type</span><button aria-label="Filter type">${tri("down")}</button></div></th>
                </tr>
                <tr>
                  <td class="file"><div><svg viewBox="0 0 22 27" width="22" height="27" aria-hidden="true"><path d="M2 0h14l6 6v21H2z" fill="#c3cde0" stroke="#7787a6"/><path d="M10 8h10M10 12h10M10 16h10M10 20h10" stroke="#8d9bb8"/><circle cx="7" cy="15" r="4" fill="#e8eef8" stroke="#4f6fa5" stroke-width="2"/><circle cx="7" cy="15" r="6" fill="none" stroke="#4f6fa5" stroke-width="2" stroke-dasharray="2 2"/></svg>J9style1</div></td>
                  <td>7/23/2007 10:43...</td><td>Cascading Style ...</td>
                </tr>
              </table>
              <div class="hs"><button class="sbtn" aria-label="Scroll left">${tri("left")}</button><div class="sbtn thumb"></div><div class="dither"></div><button class="sbtn" aria-label="Scroll right">${tri("right")}</button></div>
            </div>
            <div class="fields">
              <label for="fname">File <u>n</u>ame:</label>
              <div class="combo"><select id="fname"><option>J9style1</option></select><span class="sbtn">${tri("down", "big")}</span></div>
              <button class="push ok"><span>OK</span></button>
              <label for="ftype">Files of <u>t</u>ype:</label>
              <div class="combo"><select id="ftype"><option>CSS Files (*.css)</option></select><span class="sbtn">${tri("down", "big")}</span></div>
              <button class="push">Cancel</button>
            </div>
          </div>
        </div>
        <p class="note">SELECT A SYLE SHEET AND PRESS OK</p>
        <svg class="ink" width="845" height="676" viewBox="0 0 845 676" aria-hidden="true" fill="none" stroke="#000" stroke-width="8" stroke-linecap="round" stroke-linejoin="round">
          <ellipse cx="221" cy="133" rx="71" ry="38"/>
          <path d="M278 161L311 195L332 217L362 248"/>
          <path d="M450 302L474 327L508 361L634 492L657 516L699 558"/>
          <ellipse cx="756" cy="599" rx="81" ry="46"/>
        </svg>
      </section>`;
  }

  render() {
    const views: [string, string][] = [["Design", "design"], ["Split", "split"], ["Code", "code"], ["Preview", "lens"]];
    return html`
      <svg class="defs" width="0" height="0" aria-hidden="true"><defs>
        <linearGradient id="gPaper" x1="0" y1="0" x2="1" y2="1"><stop offset="0" stop-color="#fff"/><stop offset="1" stop-color="#c6d8ef"/></linearGradient>
        <linearGradient id="gFolder" x1="0" y1="0" x2="0" y2="1"><stop offset="0" stop-color="#fff0b0"/><stop offset="1" stop-color="#e9b94c"/></linearGradient>
        <linearGradient id="gScreen" x1="0" y1="0" x2="1" y2="1"><stop offset="0" stop-color="#a9bdf5"/><stop offset="1" stop-color="#2946d8"/></linearGradient>
        <linearGradient id="gDesk" x1="0" y1="0" x2="1" y2="1"><stop offset="0" stop-color="#1d4fc0"/><stop offset=".4" stop-color="#5b9bf0"/><stop offset="1" stop-color="#2257cf"/></linearGradient>
        <linearGradient id="gBack" x1="0" y1="0" x2="0" y2="1"><stop offset="0" stop-color="#9db8d4"/><stop offset=".5" stop-color="#1f5fa8"/><stop offset="1" stop-color="#4cc4e8"/></linearGradient>
      </defs></svg>
      <main class="window">
        <div class="titlebar">
          ${appIcon}<h1>Microsoft FrontPage - C:\\Users\\S.George\\Desktop\\0417_s09_sf_3\\J9scuba.htm</h1>
          <button class="winbtn" aria-label="Minimize"><svg width="14" height="14" viewBox="0 0 14 14"><rect x="2" y="10" width="9" height="3"/></svg></button>
          <button class="winbtn" aria-label="Restore"><svg width="14" height="14" viewBox="0 0 14 14"><path d="M5 5V1h8v8h-4M5 2h8M1 5h8v8H1zM1 6.500h8" fill="none" stroke="#000" stroke-width="1.500"/></svg></button>
          <button class="winbtn gap" aria-label="Close">${cross}</button>
        </div>
        <div class="bars">
          <div class="menubar">
            <div class="handle"></div>
            <nav>${MENUS.map(([a, k, b]) => html`<button>${a}<u>${k}</u>${b}</button>`)}</nav>
            <div class="ask"><input type="text" aria-label="Help question" placeholder="Type a question for help" /><span class="arrow">${tri("down")}</span></div>
          </div>
          <div class="toolbar"><div class="handle"></div>${this.bar(STANDARD)}<div class="cap">${tri("down")}</div></div>
          <div class="toolbar"><div class="handle"></div>
            ${this.pick("style", "Style", "Normal")}${this.pick("font", "Font", "Times New Roman")}${this.pick("size", "Size", "3\u00a0 (12 pt)")}
            ${this.bar(FORMATTING)}<div class="cap">${tri("down")}</div></div>
        </div>
        <div class="tabs"><div class="tab"><button>J9scuba.htm</button></div><button class="close" aria-label="Close page">${cross}</button></div>
        <div class="path">
          <button class="step" aria-label="Previous tags">${tri("left", "dim")}</button><button>&lt;body&gt;</button><button class="on">&lt;p&gt;</button>
          <button class="step" aria-label="Next tags">${tri("right", "dim")}</button>
        </div>
        <div class="work">
          <article class="doc">
            <p>Place anchor here</p>
            <p>Last edited by Centre number, candidate number, name</p>
            <table>
              <colgroup><col class="c1" /><col /><col class="c3" /></colgroup>
              <tr><td class="tall">Logo image</td><td class="tall" colspan="2"></td></tr>
              <tr><td class="intro" colspan="3">
                <div><span>With over 70% of the world covered in water, you</span><span>g sights. See vibrant creatures like fish, shrimps,</span></div>
                <div class="short"><span>and an array of underwater flora</span><span>erent perspective on the world.</span></div>
              </td></tr>
              <tr><td rowspan="3">Sunset image</td><td></td><td>Shoal image</td></tr>
              <tr><td></td><td>Fish image</td></tr>
              <tr><td></td><td>Dolphin image</td></tr>
            </table>
            <p>Click Here to return to the top of the page.</p>
          </article>
          <div class="vscroll dither"><button class="sbtn" aria-label="Scroll up">${tri("up", "dim")}</button><button class="sbtn" aria-label="Scroll down">${tri("down", "dim big")}</button></div>
        </div>
        <div class="views">
          ${views.map(([name, ic]) => html`<button class=${classMap({ view: true, on: this.view === name })} @click=${() => (this.view = name)}>${icon(ic)}${name}</button>`)}
          <div class="split"></div>
          <button class="sbtn" aria-label="Scroll left">${tri("left", "dim")}</button><div class="dither"></div><button class="sbtn" aria-label="Scroll right">${tri("right", "dim")}</button>
        </div>
        <footer class="status"><span class="wide"></span><span class="s1">0:01@56Kbps</span><span class="s2">1348 x 534</span><span class="s3">Default</span><span class="s4">Custom</span></footer>
        ${this.dialog()}
      </main>`;
  }
}
